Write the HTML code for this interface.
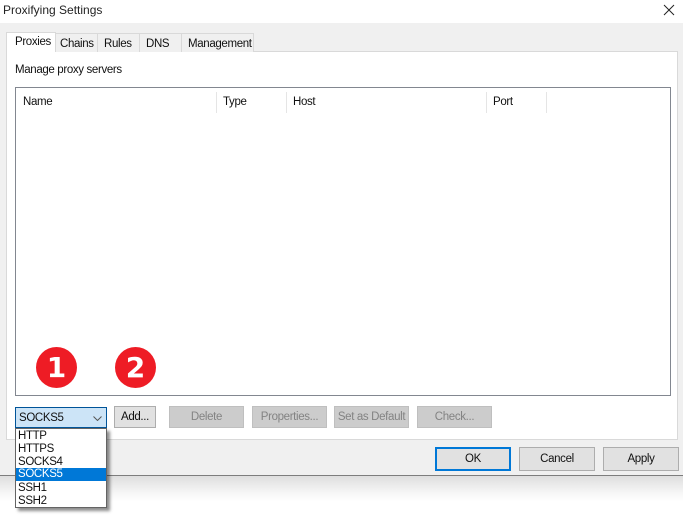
<!DOCTYPE html>
<html><head><meta charset="utf-8"><style>
html,body{margin:0;padding:0;background:#fff}
#r{position:relative;width:683px;height:520px;overflow:hidden;background:#fff;font:11.5px "Liberation Sans",sans-serif;letter-spacing:-.35px;color:#111}
#r div{position:absolute;box-sizing:border-box;white-space:nowrap}
.tab{background:#f0f0f0;border:1px solid #d9d9d9;border-bottom:0;top:33px;height:19px;line-height:20px}
.b{top:406px;height:22px;line-height:21px;text-align:center;background:#cccccc;border:1px solid #bfbfbf;color:#838383}
.f{top:447px;width:76px;height:24px;line-height:23px;text-align:center;background:#e1e1e1;border:1px solid #adadad;color:#111}
.h{top:92px;height:21px;width:1px;background:#e5e5e5}
.t{top:95px;line-height:14px}
.i{left:2px;width:89px;height:13px;line-height:13px;padding-left:0}
.c{width:41px;height:41px;border-radius:50%;background:#ee1c25;top:347px;color:#fff;font:bold 28px/41px "DejaVu Sans",sans-serif;letter-spacing:0;text-align:center}
</style></head><body><div id="r">
<div style="left:0;top:476px;width:683px;height:26px;background:linear-gradient(#dedede,#f6f6f6 65%,#fff)"></div>
<div style="left:0;top:0;width:683px;height:23px;background:#fff"></div>
<div style="left:3px;top:3px;font-size:12px;letter-spacing:0;line-height:14px;color:#222">Proxifying Settings</div>
<svg style="position:absolute;left:663px;top:4px" width="12" height="12" viewBox="0 0 12 12"><path d="M1 1L11 11M11 1L1 11" stroke="#222" stroke-width="1" fill="none"/></svg>
<div style="left:0;top:23px;width:683px;height:453px;background:#f0f0f0;border-bottom:1px solid #7d7d7d"></div>
<div style="left:6px;top:51px;width:672px;height:389px;background:#fff;border:1px solid #d9d9d9"></div>
<div class="tab" style="left:55px;width:43px;padding-left:4px">Chains</div>
<div class="tab" style="left:97px;width:43px;padding-left:6px">Rules</div>
<div class="tab" style="left:139px;width:43px;padding-left:6px">DNS</div>
<div class="tab" style="left:181px;width:73px;padding-left:6px">Management</div>
<div class="tab" style="left:6px;top:32px;width:50px;height:20px;line-height:18px;background:#fff;z-index:2;padding-left:8px">Proxies</div>
<div style="left:15px;top:63px;line-height:14px">Manage proxy servers</div>
<div style="left:15px;top:87px;width:656px;height:309px;background:#fff;border:1px solid #828790"></div>
<div class="t" style="left:23px">Name</div><div class="h" style="left:216px"></div>
<div class="t" style="left:223px">Type</div><div class="h" style="left:286px"></div>
<div class="t" style="left:293px">Host</div><div class="h" style="left:486px"></div>
<div class="t" style="left:493px">Port</div><div class="h" style="left:546px"></div>
<div class="c" style="left:36px">1</div>
<div class="c" style="left:115px">2</div>
<div style="left:15px;top:407px;width:92px;height:21px;background:#cce4f7;border:1px solid #005499;line-height:20px;padding-left:3px">SOCKS5
<svg style="position:absolute;left:77px;top:8px" width="9" height="5" viewBox="0 0 9 5"><path d="M0.5 0.5L4.5 4.5L8.5 0.5" stroke="#555" fill="none"/></svg></div>
<div class="b" style="left:114px;width:42px;background:#e1e1e1;border-color:#adadad;color:#111">Add...</div>
<div class="b" style="left:169px;width:75px">Delete</div>
<div class="b" style="left:252px;width:75px">Properties...</div>
<div class="b" style="left:334px;width:75px">Set as Default</div>
<div class="b" style="left:417px;width:75px">Check...</div>
<div class="f" style="left:435px;border:2px solid #0078d7;line-height:21px">OK</div>
<div class="f" style="left:519px">Cancel</div>
<div class="f" style="left:603px">Apply</div>
<div style="left:15px;top:428px;width:92px;height:80px;background:#fff;border:1px solid #646464;box-shadow:3px 3px 3px rgba(0,0,0,.45)">
<div class="i" style="top:1px">HTTP</div>
<div class="i" style="top:14px">HTTPS</div>
<div class="i" style="top:27px">SOCKS4</div>
<div class="i" style="left:0;top:39px;width:90px;padding-left:2px;background:#0078d7;color:#fff">SOCKS5</div>
<div class="i" style="top:53px">SSH1</div>
<div class="i" style="top:66px">SSH2</div>
</div>
</div></body></html>
